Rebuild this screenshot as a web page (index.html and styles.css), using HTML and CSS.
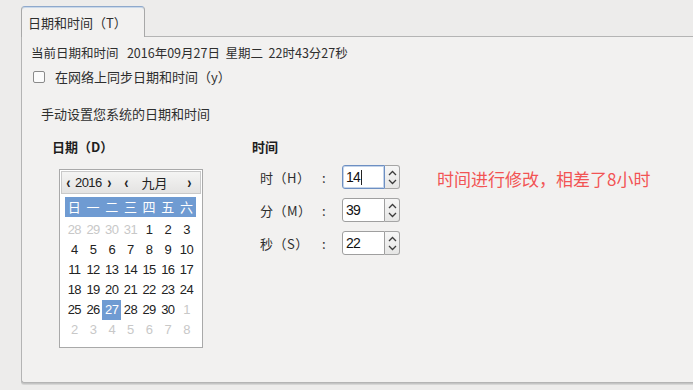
FILE: index.html
```html
<!DOCTYPE html>
<html lang="zh-CN">
<head>
  <meta charset="UTF-8">
  <title>日期和时间</title>
  <link rel="stylesheet" href="styles.css">
</head>
<body>
  <div class="window">
    <div class="tab">日期和时间（T）</div>
    <div class="panel">
      <div class="current">当前日期和时间&nbsp;&nbsp;&nbsp;2016年09月27日&nbsp;&nbsp;星期二&nbsp;&nbsp;22时43分27秒</div>
      <label class="sync"><span class="check"></span>在网络上同步日期和时间（y）</label>
      <div class="manual">手动设置您系统的日期和时间</div>

      <div class="columns">
        <div class="date-col">
          <div class="heading">日期（D）</div>
          <div class="calendar">
            <div class="cal-head">
              <span class="arrow">‹</span><span class="year">2016</span><span class="arrow">›</span>
              <span class="arrow gap">‹</span><span class="month">九月</span><span class="arrow">›</span>
            </div>
            <div class="grid weekdays">
              <span>日</span><span>一</span><span>二</span><span>三</span><span>四</span><span>五</span><span>六</span>
            </div>
            <div class="grid days">
              <span class="other">28</span><span class="other">29</span><span class="other">30</span><span class="other">31</span><span>1</span><span>2</span><span>3</span>
              <span>4</span><span>5</span><span>6</span><span>7</span><span>8</span><span>9</span><span>10</span>
              <span>11</span><span>12</span><span>13</span><span>14</span><span>15</span><span>16</span><span>17</span>
              <span>18</span><span>19</span><span>20</span><span>21</span><span>22</span><span>23</span><span>24</span>
              <span>25</span><span>26</span><span class="selected">27</span><span>28</span><span>29</span><span>30</span><span class="other">1</span>
              <span class="other">2</span><span class="other">3</span><span class="other">4</span><span class="other">5</span><span class="other">6</span><span class="other">7</span><span class="other">8</span>
            </div>
          </div>
        </div>

        <div class="time-col">
          <div class="heading">时间</div>
          <div class="time-row first">
            <span class="tlabel">时（H）</span><span class="colon">:</span>
            <div class="spin focus">
              <span class="entry">14<i class="caret"></i></span>
              <span class="btns">
                <svg width="9" height="6" viewBox="0 0 9 6"><path d="M1 5 L4.5 1.5 L8 5" fill="none" stroke="#3c3c3c" stroke-width="1.3"/></svg>
                <svg width="9" height="6" viewBox="0 0 9 6"><path d="M1 1 L4.5 4.5 L8 1" fill="none" stroke="#3c3c3c" stroke-width="1.3"/></svg>
              </span>
            </div>
          </div>
          <div class="time-row">
            <span class="tlabel">分（M）</span><span class="colon">:</span>
            <div class="spin">
              <span class="entry">39</span>
              <span class="btns">
                <svg width="9" height="6" viewBox="0 0 9 6"><path d="M1 5 L4.5 1.5 L8 5" fill="none" stroke="#3c3c3c" stroke-width="1.3"/></svg>
                <svg width="9" height="6" viewBox="0 0 9 6"><path d="M1 1 L4.5 4.5 L8 1" fill="none" stroke="#3c3c3c" stroke-width="1.3"/></svg>
              </span>
            </div>
          </div>
          <div class="time-row">
            <span class="tlabel">秒（S）</span><span class="colon">:</span>
            <div class="spin">
              <span class="entry">22</span>
              <span class="btns">
                <svg width="9" height="6" viewBox="0 0 9 6"><path d="M1 5 L4.5 1.5 L8 5" fill="none" stroke="#3c3c3c" stroke-width="1.3"/></svg>
                <svg width="9" height="6" viewBox="0 0 9 6"><path d="M1 1 L4.5 4.5 L8 1" fill="none" stroke="#3c3c3c" stroke-width="1.3"/></svg>
              </span>
            </div>
          </div>
        </div>

        <div class="note">时间进行修改，相差了8小时</div>
      </div>
    </div>
  </div>
</body>
</html>
```

FILE: styles.css
```css
* {
  box-sizing: border-box;
}

body {
  margin: 0;
  background-color: #edeceb;
  font-family: "DejaVu Sans", "Noto Sans CJK SC", sans-serif;
  font-size: 13px;
  color: #2e2e2e;
  overflow: hidden;
  width: 693px;
  height: 390px;
}

.window {
  padding: 6px 0 0 21px;
}

.tab {
  position: relative;
  z-index: 1;
  width: 124px;
  height: 31px;
  margin-bottom: -1px;
  background-color: #f2f1f0;
  border: 1px solid #a8a8a8;
  border-top-color: #8fa9cc;
  border-bottom: none;
  border-radius: 4px 4px 0 0;
  box-shadow: inset 0 1px 0 #c9d8ea;
  padding: 8px 0 0 6px;
  font-family: "Noto Sans CJK SC", sans-serif;
  font-size: 13px;
  line-height: 16px;
}

.panel {
  width: 700px;
  height: 347px;
  background-color: #f2f1f0;
  border: 1px solid #b4b4b4;
  border-right: none;
  border-radius: 0 0 0 3px;
  box-shadow: 0 1px 0 #c4c4c4, 0 2px 0 #d6d6d5;
  padding: 7px 0 0 9px;
}

.current {
  font-family: "Noto Sans CJK SC", sans-serif;
  font-size: 12.5px;
  line-height: 18px;
}

.sync {
  display: flex;
  align-items: center;
  margin-top: 7px;
  font-family: "Noto Sans CJK SC", sans-serif;
  font-size: 13px;
  line-height: 16px;
}

.check {
  width: 12px;
  height: 12px;
  margin: 0 10px 0 2px;
  border: 1px solid #8a8a8a;
  border-radius: 2px;
  background: #fbfbfb;
}

.manual {
  margin: 21px 0 0 10px;
  font-family: "Noto Sans CJK SC", sans-serif;
  font-size: 13px;
  line-height: 16px;
}

.columns {
  display: flex;
  align-items: flex-start;
  margin-top: 17px;
}

.heading {
  font-family: "Noto Sans CJK SC", sans-serif;
  font-weight: bold;
  font-size: 13px;
  line-height: 16px;
  color: #1e1e1e;
}

.date-col {
  width: 200px;
  padding-left: 21px;
}

.calendar {
  width: 144px;
  margin: 14px 0 0 7px;
  border: 1px solid #a9a9a9;
  background: #fff;
  padding-bottom: 7px;
}

.cal-head {
  display: flex;
  align-items: center;
  height: 23px;
  margin: 1px;
  border: 1px solid #c9c9c9;
  background: linear-gradient(#f4f4f3, #e4e3e2);
  font-family: "Liberation Sans Narrow", "Liberation Sans", sans-serif;
  font-size: 13px;
  color: #222;
  padding-left: 2px;
}

.cal-head .arrow {
  font-size: 16px;
  font-weight: bold;
  width: 9px;
  text-align: center;
  line-height: 14px;
  transform: scaleX(0.8);
}

.cal-head .year {
  letter-spacing: -0.6px;
  padding: 0 3px 0 2px;
}

.cal-head .gap {
  margin-left: 8px;
}

.cal-head .month {
  font-family: "Noto Sans CJK SC", sans-serif;
  margin: 0 17px 0 11px;
}

.grid {
  display: grid;
  grid-template-columns: repeat(7, 18.7px);
  margin-left: 5px;
}

.weekdays {
  margin-top: 3px;
  height: 20px;
  width: 131px;
  background: #6f9bd2;
  color: #fff;
  font-family: "Noto Sans CJK SC", sans-serif;
  font-size: 13px;
  line-height: 20px;
  text-align: center;
}

.days {
  margin-top: 3px;
  font-family: "Liberation Sans Narrow", "Liberation Sans", sans-serif;
  font-size: 13px;
  letter-spacing: -0.6px;
  text-align: center;
}

.days span {
  height: 20px;
  line-height: 20px;
  color: #222;
}

.days .other {
  color: #c8c8c8;
}

.days .selected {
  background: #6f9bd2;
  color: #fff;
}

.time-col {
  width: 169px;
  padding-left: 21px;
}

.time-row {
  display: flex;
  align-items: center;
  height: 24px;
  margin-top: 9px;
  font-family: "Noto Sans CJK SC", sans-serif;
  font-size: 13px;
}

.time-row.first {
  margin-top: 10px;
}

.tlabel {
  width: 70px;
  padding-left: 8px;
  letter-spacing: 0.5px;
}

.colon {
  width: 20px;
}

.spin {
  display: flex;
  height: 24px;
}

.entry {
  display: flex;
  align-items: center;
  width: 43px;
  height: 24px;
  padding-left: 3px;
  border: 1px solid #9f9f9f;
  border-radius: 3px 0 0 3px;
  background: #fff;
  font-family: "Liberation Sans Narrow", "Liberation Sans", sans-serif;
  font-size: 14px;
  letter-spacing: -0.8px;
  color: #111;
}

.spin.focus .entry {
  border-color: #6d8fc2;
  box-shadow: inset 0 0 0 1px #c4d4ea;
}

.caret {
  display: inline-block;
  width: 1px;
  height: 15px;
  margin-left: 1px;
  background: #222;
}

.btns {
  display: flex;
  flex-direction: column;
  justify-content: space-around;
  align-items: center;
  width: 15px;
  height: 24px;
  padding: 2px 0;
  border: 1px solid #a5a5a5;
  border-left: none;
  border-radius: 0 3px 3px 0;
  background: linear-gradient(#f6f6f6, #e6e6e5);
}

.note {
  margin: 30px 0 0 37px;
  font-family: "Noto Sans CJK SC", sans-serif;
  font-size: 17px;
  line-height: 20px;
  color: #f25454;
}
```
